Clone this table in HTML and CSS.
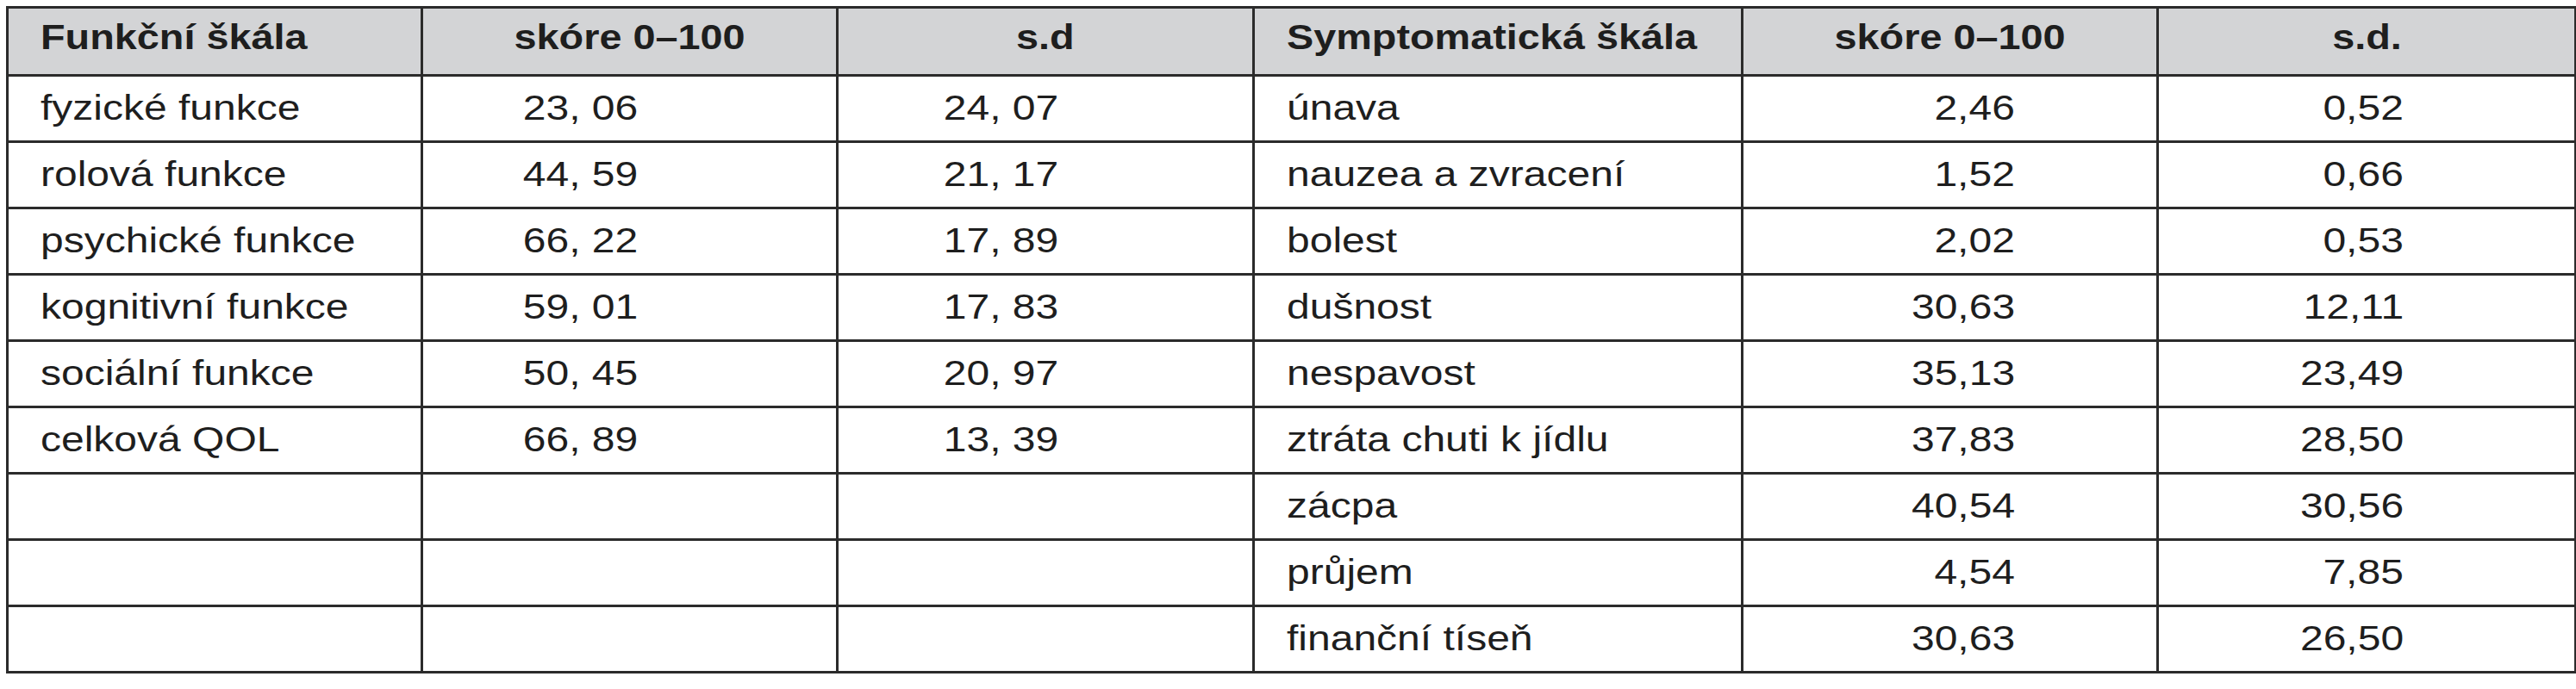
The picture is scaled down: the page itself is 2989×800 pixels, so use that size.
FILE: index.html
```html
<!DOCTYPE html>
<html lang="cs">
<head>
<meta charset="utf-8">
<title>Skóre kvality života</title>
<link rel="stylesheet" href="styles.css">
</head>
<body>
<table class="qol">
  <colgroup>
    <col class="c1"><col class="c2"><col class="c3"><col class="c4"><col class="c5"><col class="c6">
  </colgroup>
  <thead>
    <tr>
      <th class="lbl"><span class="t">Funkční škála</span></th>
      <th class="ctr"><span class="t">skóre 0–100</span></th>
      <th class="ctr"><span class="t">s.d</span></th>
      <th class="lbl"><span class="t">Symptomatická škála</span></th>
      <th class="ctr"><span class="t">skóre 0–100</span></th>
      <th class="ctr"><span class="t">s.d.</span></th>
    </tr>
  </thead>
  <tbody>
    <tr><td class="lbl"><span class="t">fyzické funkce</span></td><td class="n2"><span class="t">23, 06</span></td><td class="n3"><span class="t">24, 07</span></td><td class="lbl"><span class="t">únava</span></td><td class="n5"><span class="t">2,46</span></td><td class="n6"><span class="t">0,52</span></td></tr>
    <tr><td class="lbl"><span class="t">rolová funkce</span></td><td class="n2"><span class="t">44, 59</span></td><td class="n3"><span class="t">21, 17</span></td><td class="lbl"><span class="t">nauzea a zvracení</span></td><td class="n5"><span class="t">1,52</span></td><td class="n6"><span class="t">0,66</span></td></tr>
    <tr><td class="lbl"><span class="t">psychické funkce</span></td><td class="n2"><span class="t">66, 22</span></td><td class="n3"><span class="t">17, 89</span></td><td class="lbl"><span class="t">bolest</span></td><td class="n5"><span class="t">2,02</span></td><td class="n6"><span class="t">0,53</span></td></tr>
    <tr><td class="lbl"><span class="t">kognitivní funkce</span></td><td class="n2"><span class="t">59, 01</span></td><td class="n3"><span class="t">17, 83</span></td><td class="lbl"><span class="t">dušnost</span></td><td class="n5"><span class="t">30,63</span></td><td class="n6"><span class="t">12,11</span></td></tr>
    <tr><td class="lbl"><span class="t">sociální funkce</span></td><td class="n2"><span class="t">50, 45</span></td><td class="n3"><span class="t">20, 97</span></td><td class="lbl"><span class="t">nespavost</span></td><td class="n5"><span class="t">35,13</span></td><td class="n6"><span class="t">23,49</span></td></tr>
    <tr><td class="lbl"><span class="t">celková QOL</span></td><td class="n2"><span class="t">66, 89</span></td><td class="n3"><span class="t">13, 39</span></td><td class="lbl"><span class="t">ztráta chuti k jídlu</span></td><td class="n5"><span class="t">37,83</span></td><td class="n6"><span class="t">28,50</span></td></tr>
    <tr><td></td><td></td><td></td><td class="lbl"><span class="t">zácpa</span></td><td class="n5"><span class="t">40,54</span></td><td class="n6"><span class="t">30,56</span></td></tr>
    <tr><td></td><td></td><td></td><td class="lbl"><span class="t">průjem</span></td><td class="n5"><span class="t">4,54</span></td><td class="n6"><span class="t">7,85</span></td></tr>
    <tr><td></td><td></td><td></td><td class="lbl"><span class="t">finanční tíseň</span></td><td class="n5"><span class="t">30,63</span></td><td class="n6"><span class="t">26,50</span></td></tr>
  </tbody>
</table>
</body>
</html>
```

FILE: styles.css
```css
html, body {
  background: #ffffff;
}
body {
  margin: 7px 0 0 7px;
  font-family: "Liberation Sans", Arial, Helvetica, sans-serif;
  color: #1e1e1e;
}
.qol {
  border-collapse: collapse;
  table-layout: fixed;
  width: 2980px;
}
.c1 { width: 481px; }
.c2 { width: 482px; }
.c3 { width: 483px; }
.c4 { width: 567px; }
.c5 { width: 482px; }
.c6 { width: 485px; }

.qol th,
.qol td {
  border: 3px solid #2b2b2b;
  padding: 0 0 2px 0;
  font-size: 40px;
  line-height: 1;
  vertical-align: middle;
  white-space: nowrap;
}
.qol thead tr { height: 79px; }
.qol tbody tr { height: 77px; }
.qol th {
  background: #d3d4d6;
  font-weight: bold;
  padding-bottom: 10px;
}
.t {
  display: inline-block;
  transform: scaleX(1.2);
}
.qol th .t { transform: scaleX(1.17); }
.lbl { text-align: left; padding-left: 37px !important; }
.lbl .t { transform-origin: left center; }
.ctr { text-align: center; }
.ctr .t { transform-origin: center center; }
.n2, .n3, .n5, .n6 { text-align: right; }
.n2 .t, .n3 .t, .n5 .t, .n6 .t { transform-origin: right center; }
.n2 { padding-right: 230px !important; }
.n3 { padding-right: 225px !important; }
.n5 { padding-right: 164px !important; }
.n6 { padding-right: 198px !important; }
```
